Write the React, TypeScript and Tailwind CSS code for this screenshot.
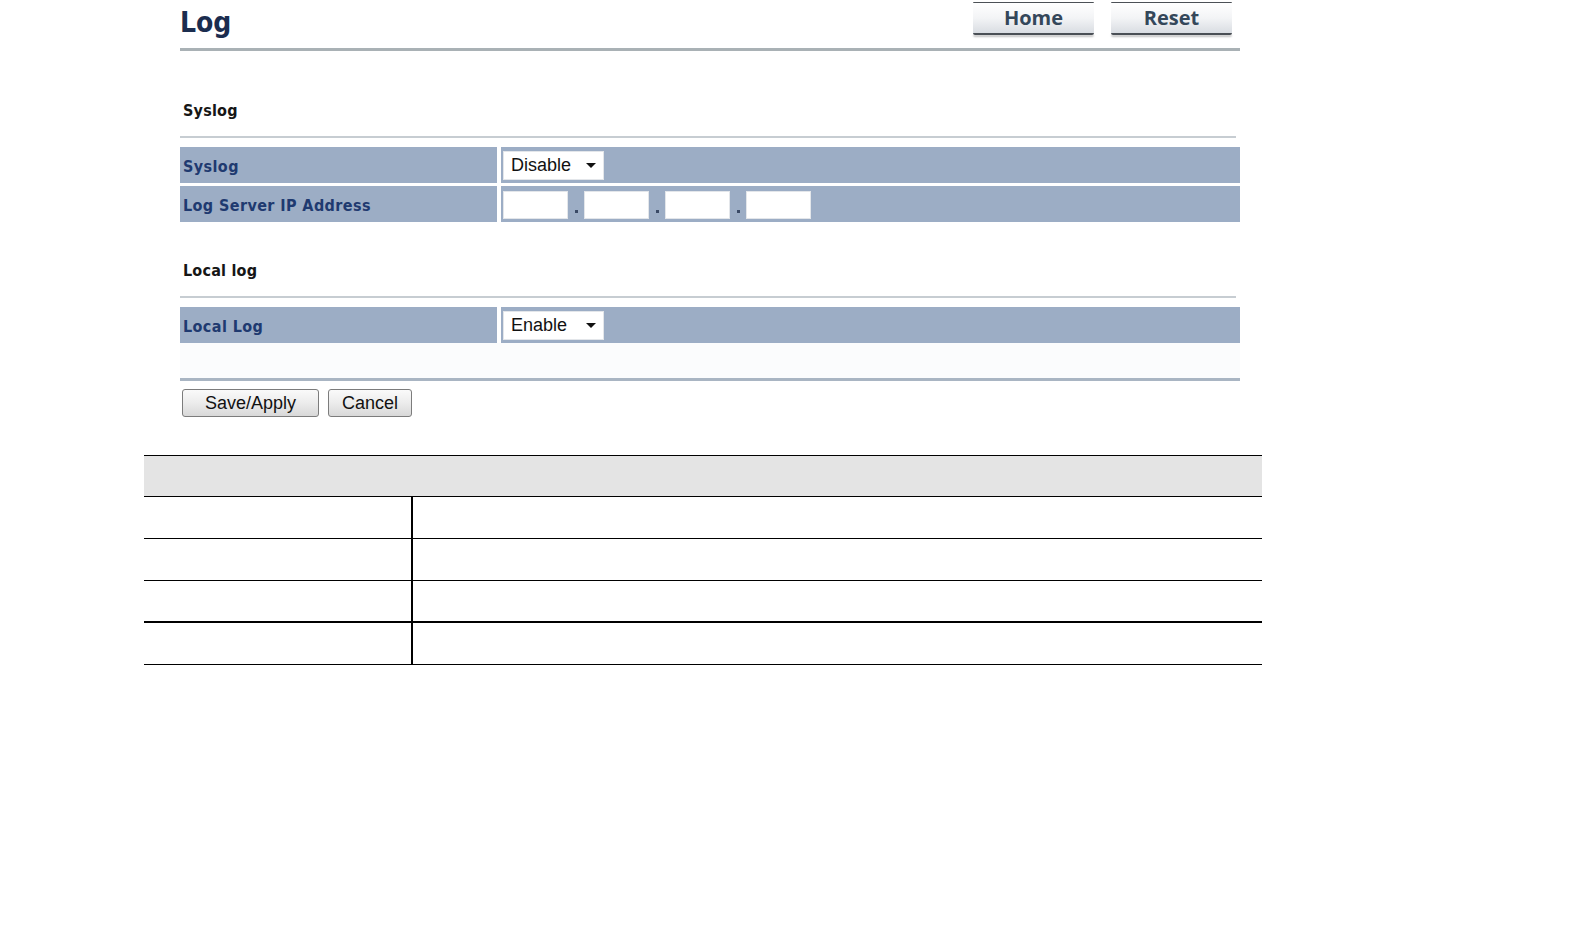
import React from "react";

const cond = { fontFamily: '"DejaVu Sans Condensed", "DejaVu Sans", Verdana, sans-serif', fontStretch: "condensed" as const };

function TopButton({ label }: { label: string }) {
  return (
    <div className="flex h-[33px] w-[121px] flex-col">
      <div className="h-[3px] rounded-t-[2px] bg-[#4c5156]" />
      <div className="flex flex-1 items-center justify-center bg-gradient-to-b from-[#ffffff] via-[#f3f4f6] to-[#d9dde2] text-[20px] font-bold text-[#34475a] [font-family:'Open_Sans',sans-serif]">
        {label}
      </div>
      <div className="h-[4px] rounded-b-[2px] bg-[#4a4f55] shadow-[0_2px_2px_rgba(0,0,0,0.25)]" />
    </div>
  );
}

function SelectBox({ value }: { value: string }) {
  return (
    <div className="flex h-[29px] w-[101px] items-center justify-between border border-[#e3e6ea] bg-white pl-[7px] pr-[6px] text-[18px] text-[#111] [font-family:'Liberation_Sans',Arial,sans-serif]">
      <span>{value}</span>
      <svg width="10" height="5" viewBox="0 0 10 5" className="mr-[1px]">
        <polygon points="0,0 10,0 5,5" fill="#111" />
      </svg>
    </div>
  );
}

function IpBox() {
  return <div className="h-[28px] w-[65px] border border-[#e3e6ea] bg-white" />;
}

function Dot() {
  return (
    <div className="flex h-[28px] w-[16px] items-end justify-center pb-[6px]">
      <div className="h-[3px] w-[3px] bg-[#3a4a66]" />
    </div>
  );
}

function Row({ label, children }: { label: string; children: React.ReactNode }) {
  return (
    <div className="flex h-[36px]">
      <div className="flex w-[317px] items-center bg-[#9cadc5] pl-[3px] pt-[3px] text-[16px] font-bold tracking-[0.4px] text-[#1f3a70]" style={cond}>
        {label}
      </div>
      <div className="w-[4px] bg-white" />
      <div className="flex flex-1 items-center bg-[#9cadc5] pl-[2px]">{children}</div>
    </div>
  );
}

function Heading({ text, h, pb }: { text: string; h: string; pb: string }) {
  return (
    <div className={`flex ${h} items-end ${pb} pl-[3px]`}>
      <span className="text-[16px] font-bold leading-[20px] tracking-[0.2px] text-[#161616]" style={cond}>
        {text}
      </span>
    </div>
  );
}

function GrayButton({ label, w }: { label: string; w: string }) {
  return (
    <div className={`flex h-[28px] ${w} items-center justify-center rounded-[3px] border border-[#7c7c7c] bg-gradient-to-b from-[#fafafa] via-[#ececec] to-[#d8d8d8] text-[18px] text-[#111] [font-family:'Liberation_Sans',Arial,sans-serif]`}>
      {label}
    </div>
  );
}

export default function App() {
  return (
    <div className="min-h-[942px] w-[1584px] bg-white">
      <div className="ml-[180px] w-[1060px]">
        {/* Title bar */}
        <div className="flex h-[48px] items-start justify-between">
          <div className="pt-[6px] text-[28px] font-bold leading-[34px] text-[#1b2d4f]" style={cond}>
            Log
          </div>
          <div className="mr-[8px] flex gap-[17px] pt-[2px]">
            <TopButton label="Home" />
            <TopButton label="Reset" />
          </div>
        </div>
        <div className="h-[3px] bg-[#a9b1b5]" />

        {/* Syslog */}
        <Heading text="Syslog" h="h-[85px]" pb="pb-[15px]" />
        <div className="mr-[4px] h-[2px] bg-[#c7cdd2]" />
        <div className="mt-[9px] flex flex-col gap-[3px]">
          <Row label="Syslog">
            <SelectBox value="Disable" />
          </Row>
          <Row label="Log Server IP Address">
            <div className="flex items-center pt-[2px]">
              <IpBox />
              <Dot />
              <IpBox />
              <Dot />
              <IpBox />
              <Dot />
              <IpBox />
            </div>
          </Row>
        </div>

        {/* Local log */}
        <Heading text="Local log" h="h-[74px]" pb="pb-[15px]" />
        <div className="mr-[4px] h-[2px] bg-[#c7cdd2]" />
        <div className="mt-[9px]">
          <Row label="Local Log">
            <SelectBox value="Enable" />
          </Row>
        </div>
        <div className="h-[35px] bg-[#fbfcfd]" />
        <div className="h-[3px] bg-[#a9b5c3]" />

        <div className="mt-[8px] flex gap-[9px] pl-[2px]">
          <GrayButton label="Save/Apply" w="w-[137px]" />
          <GrayButton label="Cancel" w="w-[84px]" />
        </div>
      </div>

      {/* Table */}
      <div className="ml-[144px] mt-[38px] w-[1118px] border-t border-black">
        <div className="h-[41px] border-b border-black bg-[#e4e4e4]" />
        {[0, 1, 2, 3].map((i) => (
          <div
            key={i}
            className={`flex h-[42px] ${i === 2 ? "border-b-[2px]" : "border-b"} border-black`}
          >
            <div className="w-[269px] border-r-[2px] border-black" />
            <div className="flex-1" />
          </div>
        ))}
      </div>
    </div>
  );
}
